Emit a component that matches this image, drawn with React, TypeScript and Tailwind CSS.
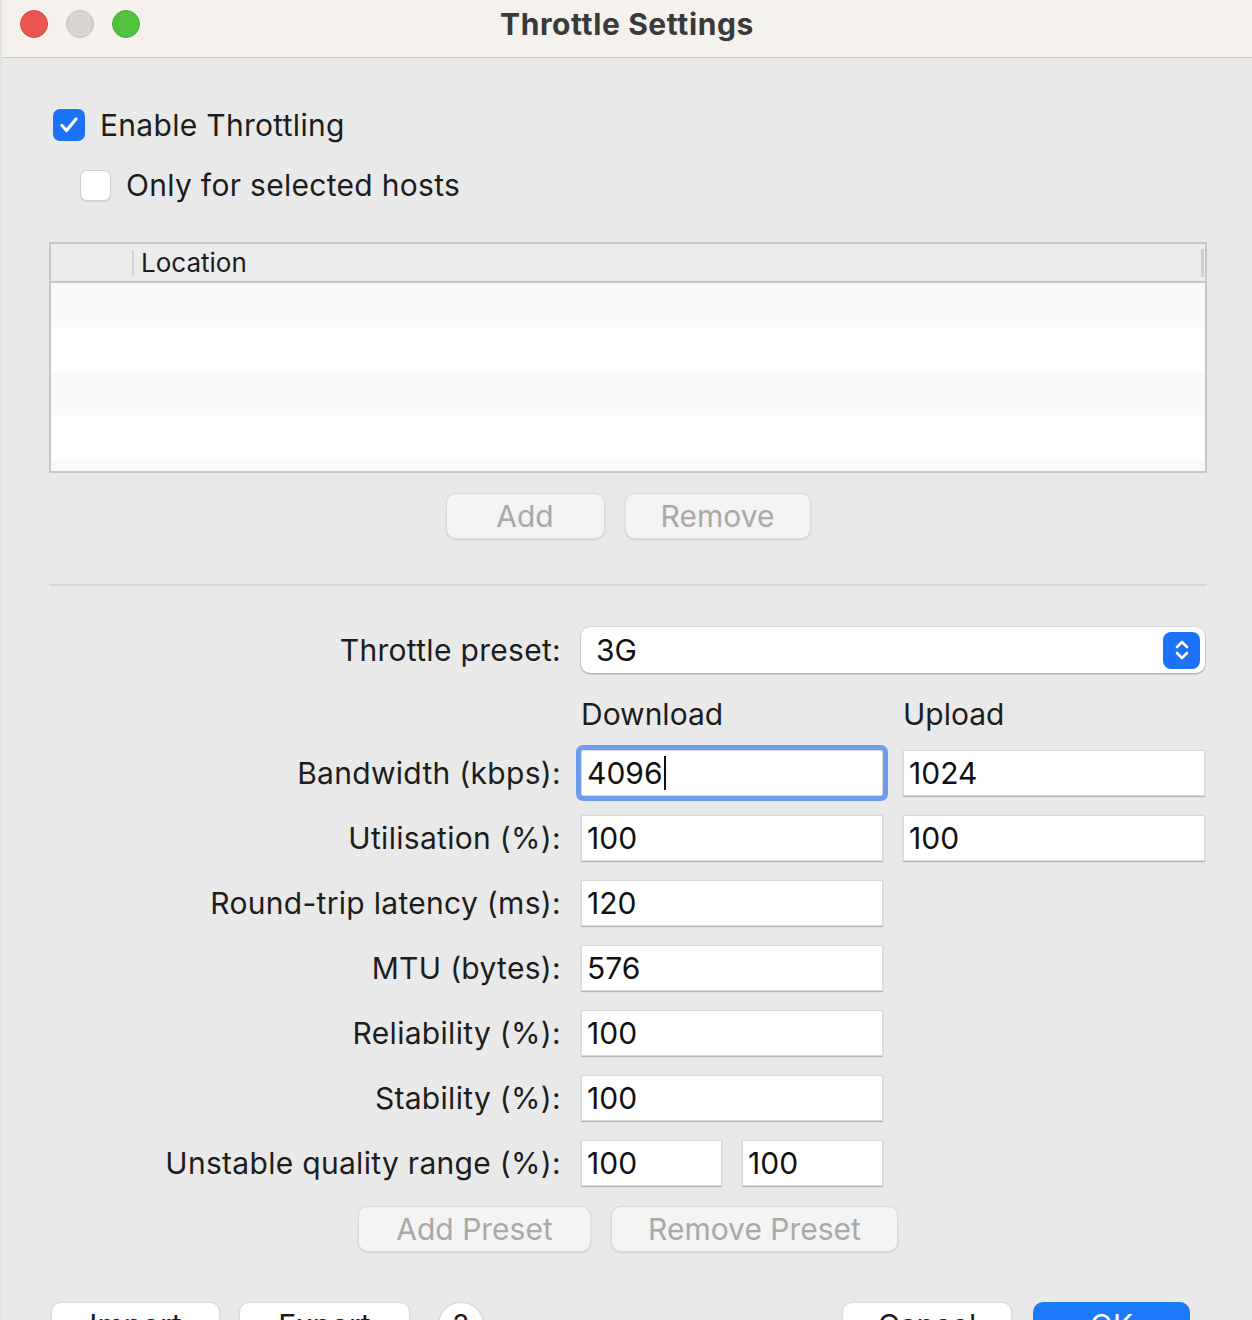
import React from "react";

const sans = "font-['Inter','Liberation_Sans',sans-serif]";

function Field({ value, focused = false, className = "" }: { value: string; focused?: boolean; className?: string }) {
  return (
    <div
      className={`flex h-[46px] items-center border border-[#d9d9d9] bg-white pl-[5px] text-[30px] text-[#111] shadow-[0_1px_1px_rgba(0,0,0,0.22)] ${
        focused ? "rounded-[2px] outline outline-[5px] outline-[#6d9ced]" : ""
      } ${className}`}
    >
      <span>{value}</span>
      {focused && <span className="ml-[1px] h-[34px] w-[2px] bg-[#111]" />}
    </div>
  );
}

function Button({ label, disabled = true, className = "" }: { label: string; disabled?: boolean; className?: string }) {
  return (
    <div
      className={`flex h-[46px] items-center justify-center rounded-[10px] border border-[#dcdcdc] bg-[#f4f4f4] text-[30px] shadow-[0_1px_2px_rgba(0,0,0,0.12)] ${
        disabled ? "text-[#a9a9a9]" : "text-[#1b1b1b]"
      } ${className}`}
    >
      {label}
    </div>
  );
}

function Row({ label, children }: { label: string; children: React.ReactNode }) {
  return (
    <>
      <div className="flex h-[46px] items-center justify-end text-[30px] tracking-[0.01em] text-[#1d1d1d]">{label}</div>
      {children}
    </>
  );
}

export default function App() {
  return (
    <div className={`h-[1320px] w-[1252px] overflow-hidden bg-[#e2e2e2] pl-[2px] ${sans}`}>
      <div className="h-full bg-[#e9e9e9]">
        {/* title bar */}
        <div className="relative flex h-[58px] items-center justify-center border-b border-[#c9c6c3] bg-[#f5f1ed]">
          <div className="absolute left-[18px] top-[10px] flex gap-[18px]">
            <span className="h-[28px] w-[28px] rounded-full border border-[#d4483f] bg-[#ea5650]" />
            <span className="h-[28px] w-[28px] rounded-full border border-[#c2beba] bg-[#d9d5d1]" />
            <span className="h-[28px] w-[28px] rounded-full border border-[#45ad36] bg-[#53c23f]" />
          </div>
          <span className="pb-[9px] text-[30px] font-bold tracking-[0.02em] text-[#3a3a3a]">Throttle Settings</span>
        </div>

        <div className="pl-[47px] pr-[45px]">
          {/* checkboxes */}
          <div className="mt-[51px] flex h-[32px] items-center gap-[15px] pl-[4px]">
            <span className="flex h-[32px] w-[32px] items-center justify-center rounded-[7px] bg-[#1b72f6]">
              <svg width="22" height="22" viewBox="0 0 22 22">
                <path d="M4 11.5l4.5 5L18 5" fill="none" stroke="white" strokeWidth="3.2" strokeLinecap="round" strokeLinejoin="round" />
              </svg>
            </span>
            <span className="text-[30px] tracking-[0.01em] text-[#1d1d1d]">Enable Throttling</span>
          </div>
          <div className="mt-[28px] flex h-[32px] items-center gap-[15px] pl-[31px]">
            <span className="h-[31px] w-[31px] rounded-[7px] border border-[#d0d0d0] bg-white shadow-[0_1px_1px_rgba(0,0,0,0.1)]" />
            <span className="text-[30px] tracking-[0.01em] text-[#1d1d1d]">Only for selected hosts</span>
          </div>

          {/* table */}
          <div className="mt-[41px] h-[231px] border-2 border-[#c6c6c6] bg-white">
            <div className="flex h-[39px] items-center border-b-2 border-[#c6c6c6] bg-[#ececec]">
              <span className="ml-[81px] h-[26px] w-[2px] bg-[#d4d4d4]" />
              <span className="ml-[7px] flex-1 text-[26px] text-[#1d1d1d]">Location</span>
              <span className="mr-[1px] h-[28px] w-[3px] bg-[#cfcfcf]" />
            </div>
            <div className="h-[44px] bg-[#fafafa]" />
            <div className="h-[44px] bg-white" />
            <div className="h-[44px] bg-[#fafafa]" />
            <div className="h-[44px] bg-white" />
            <div className="h-[12px] bg-[#fafafa]" />
          </div>

          <div className="mt-[20px] flex justify-center gap-[20px]">
            <Button label="Add" className="w-[159px]" />
            <Button label="Remove" className="w-[186px]" />
          </div>

          <div className="mt-[45px] h-[2px] bg-[#d6d6d6]" />

          {/* form */}
          <div className="mt-[41px] grid grid-cols-[512px_302px_302px] gap-x-5 gap-y-[19px]">
            <Row label="Throttle preset:">
              <div className="col-span-2 flex h-[46px] items-center justify-between rounded-[9px] bg-white pl-[15px] pr-[5px] text-[30px] text-[#111] shadow-[0_1px_2px_rgba(0,0,0,0.3),0_0_0_1px_rgba(0,0,0,0.05)]">
                <span>3G</span>
                <span className="flex h-[37px] w-[37px] items-center justify-center rounded-[8px] bg-[#1b72f6]">
                  <svg width="20" height="28" viewBox="0 0 20 28">
                    <path d="M5 11l5-5 5 5M5 17l5 5 5-5" fill="none" stroke="white" strokeWidth="2.6" strokeLinecap="round" strokeLinejoin="round" />
                  </svg>
                </span>
              </div>
            </Row>
            <div className="h-[39px]" />
            <div className="flex h-[39px] items-center pt-[5px] text-[30px] text-[#1d1d1d]">Download</div>
            <div className="flex h-[39px] items-center pt-[5px] text-[30px] text-[#1d1d1d]">Upload</div>

            <Row label="Bandwidth (kbps):">
              <Field value="4096" focused />
              <Field value="1024" />
            </Row>
            <Row label="Utilisation (%):">
              <Field value="100" />
              <Field value="100" />
            </Row>
            <Row label="Round-trip latency (ms):">
              <Field value="120" />
              <div />
            </Row>
            <Row label="MTU (bytes):">
              <Field value="576" />
              <div />
            </Row>
            <Row label="Reliability (%):">
              <Field value="100" />
              <div />
            </Row>
            <Row label="Stability (%):">
              <Field value="100" />
              <div />
            </Row>
            <Row label="Unstable quality range (%):">
              <div className="flex gap-5">
                <Field value="100" className="flex-1" />
                <Field value="100" className="flex-1" />
              </div>
              <div />
            </Row>
          </div>

          <div className="mt-[20px] flex justify-center gap-[20px]">
            <Button label="Add Preset" className="w-[233px]" />
            <Button label="Remove Preset" className="w-[287px]" />
          </div>

          {/* bottom buttons */}
          <div className="mt-[50px] flex items-start">
            <Button label="Import" disabled={false} className="ml-[2px] w-[169px] bg-white" />
            <Button label="Export" disabled={false} className="ml-[19px] w-[171px] bg-white" />
            <span className="ml-[28px] flex h-[46px] w-[46px] items-center justify-center rounded-full border border-[#d6d6d6] bg-white text-[30px] text-[#1b1b1b] shadow-[0_1px_2px_rgba(0,0,0,0.15)]">
              ?
            </span>
            <div className="flex-1" />
            <Button label="Cancel" disabled={false} className="w-[170px] bg-white" />
            <div className="ml-[21px] mr-[17px] flex h-[46px] w-[157px] items-center justify-center rounded-[10px] bg-[#1a7af8] text-[30px] text-white">
              OK
            </div>
          </div>
        </div>
      </div>
    </div>
  );
}
